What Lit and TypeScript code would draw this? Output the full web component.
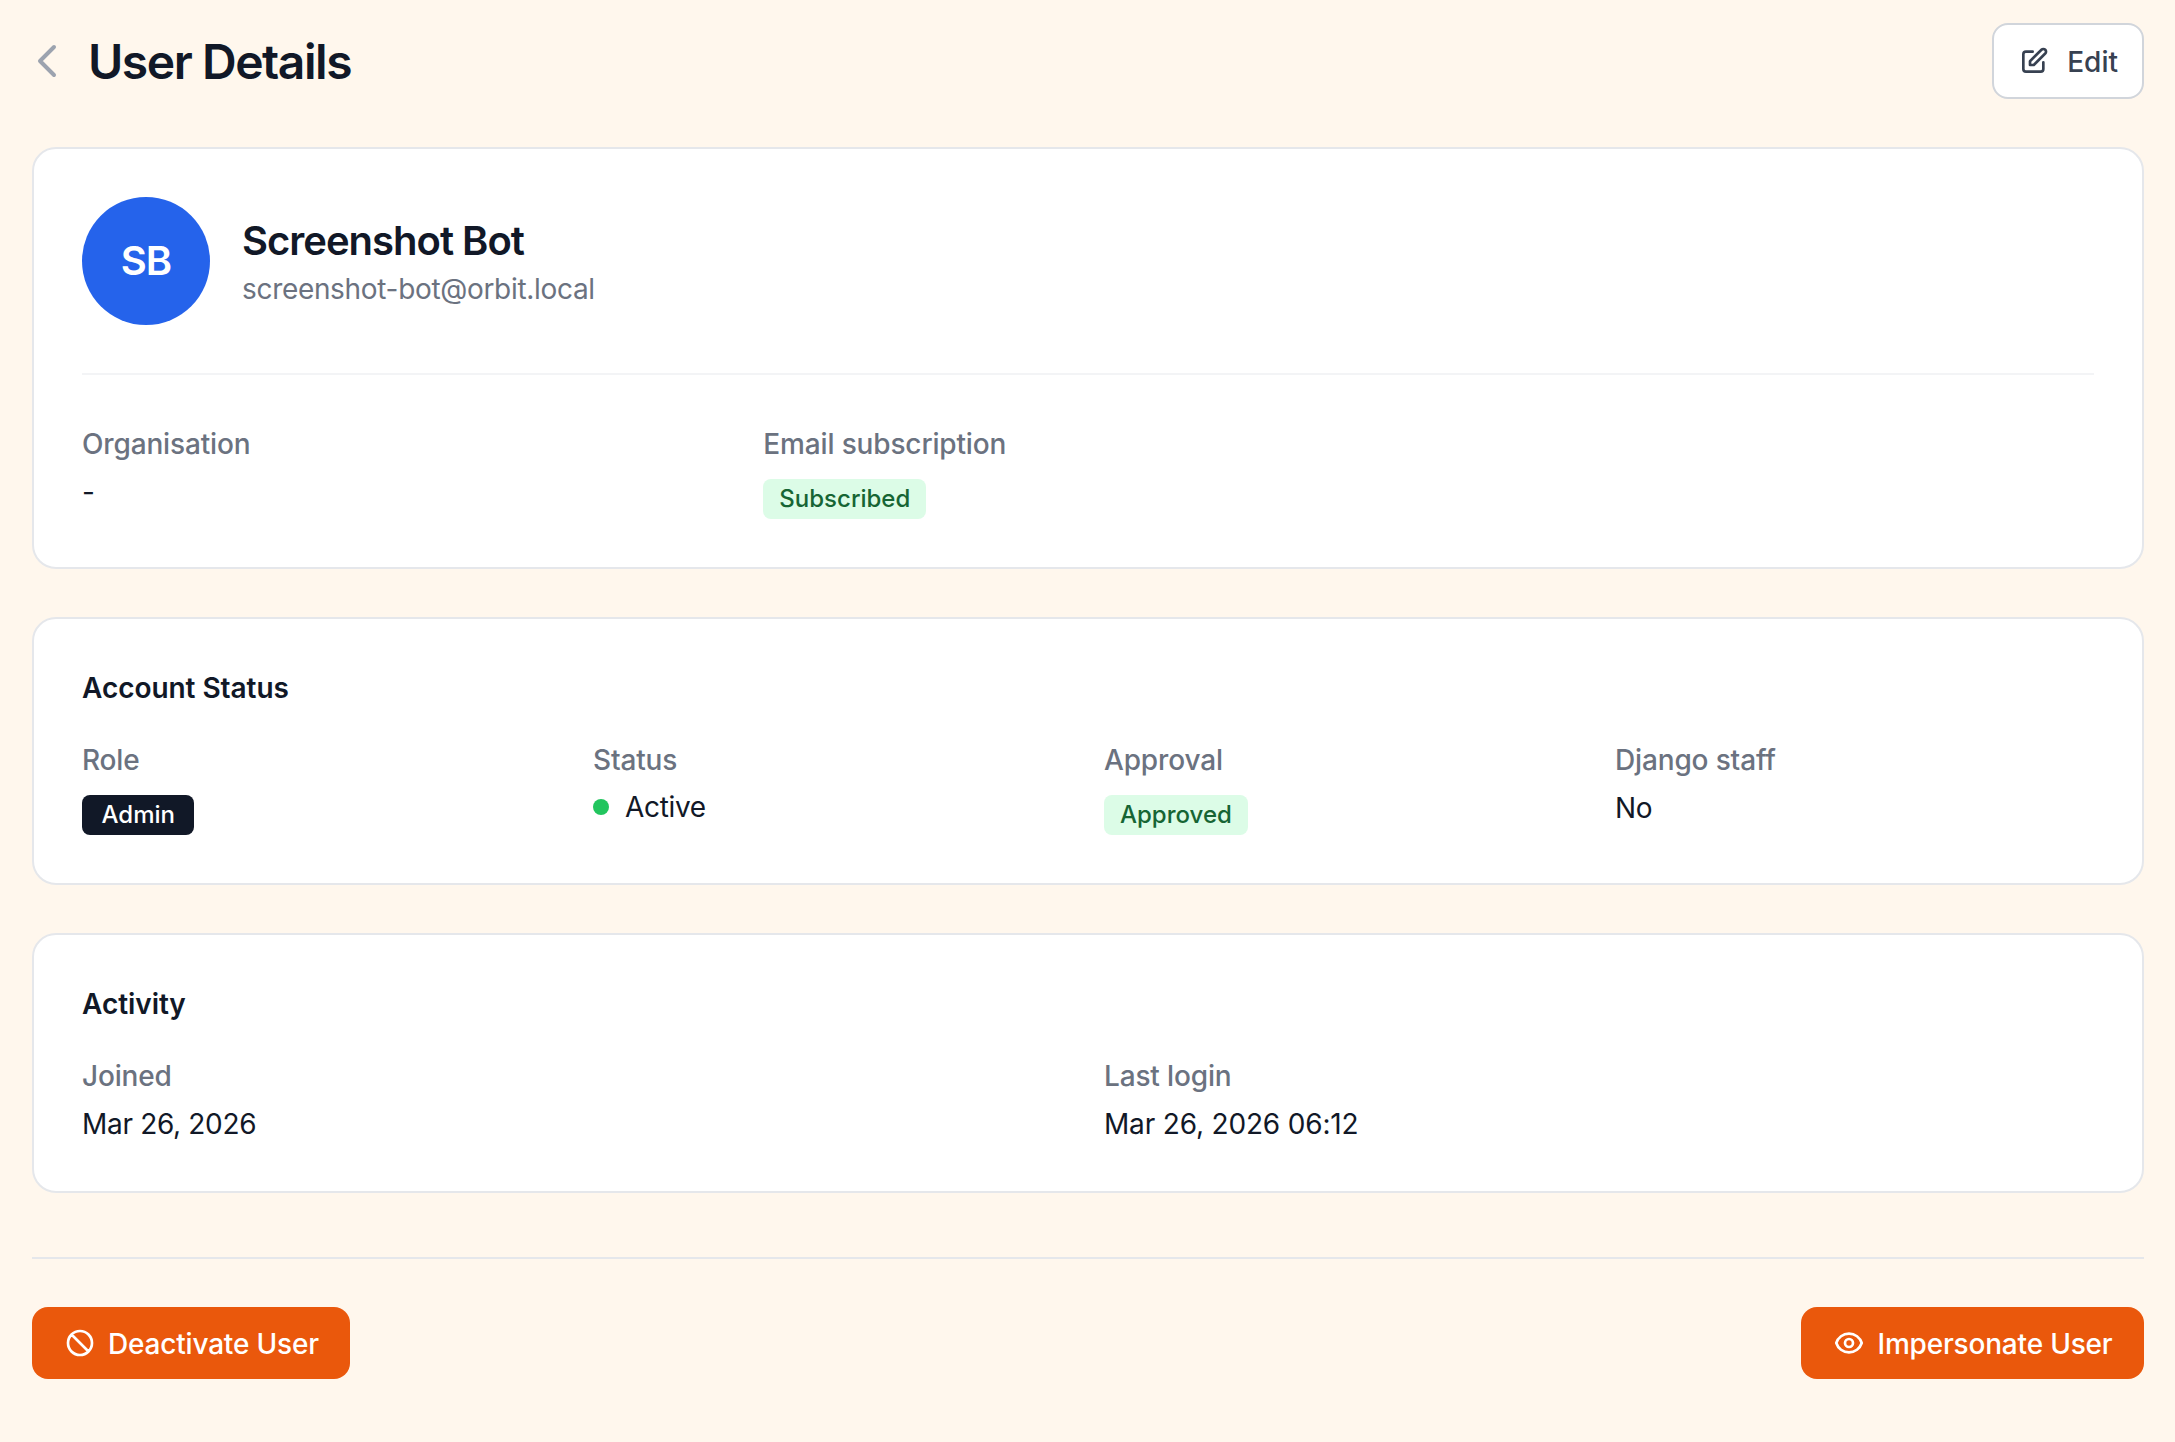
import { LitElement, html, css } from "lit";
import { customElement } from "lit/decorators.js";

@customElement("app-root")
export class AppRoot extends LitElement {
  static styles = css`
    :host {
      display: block;
      min-height: 1442px;
      box-sizing: border-box;
      background: #fff7ed;
      font-family: Inter, "Liberation Sans", sans-serif;
      color: #111827;
      padding: 23px 31px 64px 32px;
      font-size: 28px;
      line-height: 40px;
    }
    * { box-sizing: border-box; }
    .header { display: flex; align-items: center; justify-content: space-between; height: 76px; margin-bottom: 48px; }
    .title-wrap { display: flex; align-items: center; gap: 16px; margin-left: -8px; }
    .back { width: 48px; height: 48px; color: #9ca3af; display: block; }
    h1 { margin: 0; font-size: 48px; line-height: 64px; padding-top: 2px; font-weight: 600; letter-spacing: -1.45px; }
    .edit {
      display: flex; align-items: center; gap: 17px; height: 76px; padding: 0 24px;
      background: #fff; border: 2px solid #d1d5db; border-radius: 16px; color: #374151; font-weight: 500;
    }
    .edit svg { width: 32px; height: 32px; }
    .txt { padding-top: 2px; }
    .card { background: #fff; border: 2px solid #e5e7eb; border-radius: 24px; padding: 48px; margin-bottom: 48px; }
    .profile { display: flex; align-items: center; gap: 32px; padding-bottom: 48px; border-bottom: 2px solid #f3f4f6; margin-bottom: 48px; }
    .avatar { width: 128px; height: 128px; border-radius: 50%; background: #2563eb; color: #fff; display: flex; align-items: center; justify-content: center; font-size: 40px; font-weight: 600; letter-spacing: -1px; }
    .name { font-size: 40px; line-height: 56px; font-weight: 600; letter-spacing: -1px; }
    .email { color: #6b7280; font-size: 28px; line-height: 40px; letter-spacing: -0.32px; }
    h2 { margin: 0 0 32px; font-size: 28px; height: 40px; line-height: 42px; font-weight: 600; letter-spacing: -0.05px; }
    .grid { display: grid; gap: 32px; }
    .g2 { grid-template-columns: repeat(2, 1fr); }
    .g3 { grid-template-columns: repeat(3, 1fr); }
    .g4 { grid-template-columns: repeat(4, 1fr); }
    .label { color: #6b7280; font-weight: 500; height: 40px; line-height: 42px; margin-bottom: 8px; letter-spacing: -0.15px; }
    .value { letter-spacing: -0.32px; height: 40px; line-height: 42px; }
    .wide { letter-spacing: -0.17px; }
    .badge { display: inline-block; margin-top: 8px; padding: 0 16px; height: 40px; line-height: 40px; border-radius: 8px; font-size: 24px; font-weight: 500; vertical-align: top; letter-spacing: 0; }
    .green { background: #dcfce7; color: #166534; }
    .dark { background: #111827; color: #fff; padding: 0 19.5px; }
    .active { display: flex; align-items: center; gap: 16px; }
    .dot { width: 16px; height: 16px; border-radius: 50%; background: #22c55e; }
    .rule { border: 0; border-top: 2px solid #e5e7eb; margin: 64px 0 48px; }
    .actions { display: flex; justify-content: space-between; }
    .btn { display: flex; align-items: center; gap: 12px; height: 72px; padding: 0 31.5px 0 32px; background: #ea580c; color: #fff; border-radius: 16px; font-weight: 500; letter-spacing: -0.19px; }
    .btn svg { width: 32px; height: 32px; }
    .card.last { margin-bottom: 0; }
  `;

  render() {
    return html`
      <div class="header">
        <div class="title-wrap">
          <svg class="back" viewBox="0 0 24 24" fill="none" stroke="currentColor" stroke-width="2" stroke-linecap="round" stroke-linejoin="round"><path d="M15 19l-7-7 7-7"/></svg>
          <h1>User Details</h1>
        </div>
        <div class="edit">
          <svg viewBox="0 0 24 24" fill="none" stroke="currentColor" stroke-width="2" stroke-linecap="round" stroke-linejoin="round"><path d="M11 5H6a2 2 0 00-2 2v11a2 2 0 002 2h11a2 2 0 002-2v-5m-1.414-9.414a2 2 0 112.828 2.828L11.828 15H9v-2.828l8.586-8.586z"/></svg>
          <span class="txt">Edit</span>
        </div>
      </div>

      <div class="card">
        <div class="profile">
          <div class="avatar">SB</div>
          <div>
            <div class="name">Screenshot Bot</div>
            <div class="email">screenshot-bot@orbit.local</div>
          </div>
        </div>
        <div class="grid g3">
          <div><div class="label">Organisation</div><div class="value">-</div></div>
          <div><div class="label">Email subscription</div><div><span class="badge green">Subscribed</span></div></div>
        </div>
      </div>

      <div class="card">
        <h2>Account Status</h2>
        <div class="grid g4">
          <div><div class="label">Role</div><div><span class="badge dark">Admin</span></div></div>
          <div><div class="label">Status</div><div class="active value"><span class="dot"></span>Active</div></div>
          <div><div class="label">Approval</div><div><span class="badge green">Approved</span></div></div>
          <div><div class="label">Django staff</div><div class="value">No</div></div>
        </div>
      </div>

      <div class="card last">
        <h2>Activity</h2>
        <div class="grid g2">
          <div><div class="label">Joined</div><div class="value">Mar 26, 2026</div></div>
          <div><div class="label">Last login</div><div class="value wide">Mar 26, 2026 06:12</div></div>
        </div>
      </div>

      <hr class="rule" />

      <div class="actions">
        <div class="btn">
          <svg viewBox="0 0 24 24" fill="none" stroke="currentColor" stroke-width="2" stroke-linecap="round" stroke-linejoin="round"><path d="M18.364 18.364A9 9 0 005.636 5.636m12.728 12.728A9 9 0 015.636 5.636m12.728 12.728L5.636 5.636"/></svg>
          <span class="txt">Deactivate User</span>
        </div>
        <div class="btn">
          <svg viewBox="0 0 24 24" fill="none" stroke="currentColor" stroke-width="2" stroke-linecap="round" stroke-linejoin="round"><path d="M15 12a3 3 0 11-6 0 3 3 0 016 0z"/><path d="M2.458 12C3.732 7.943 7.523 5 12 5c4.478 0 8.268 2.943 9.542 7-1.274 4.057-5.064 7-9.542 7-4.477 0-8.268-2.943-9.542-7z"/></svg>
          <span class="txt">Impersonate User</span>
        </div>
      </div>
    `;
  }
}
